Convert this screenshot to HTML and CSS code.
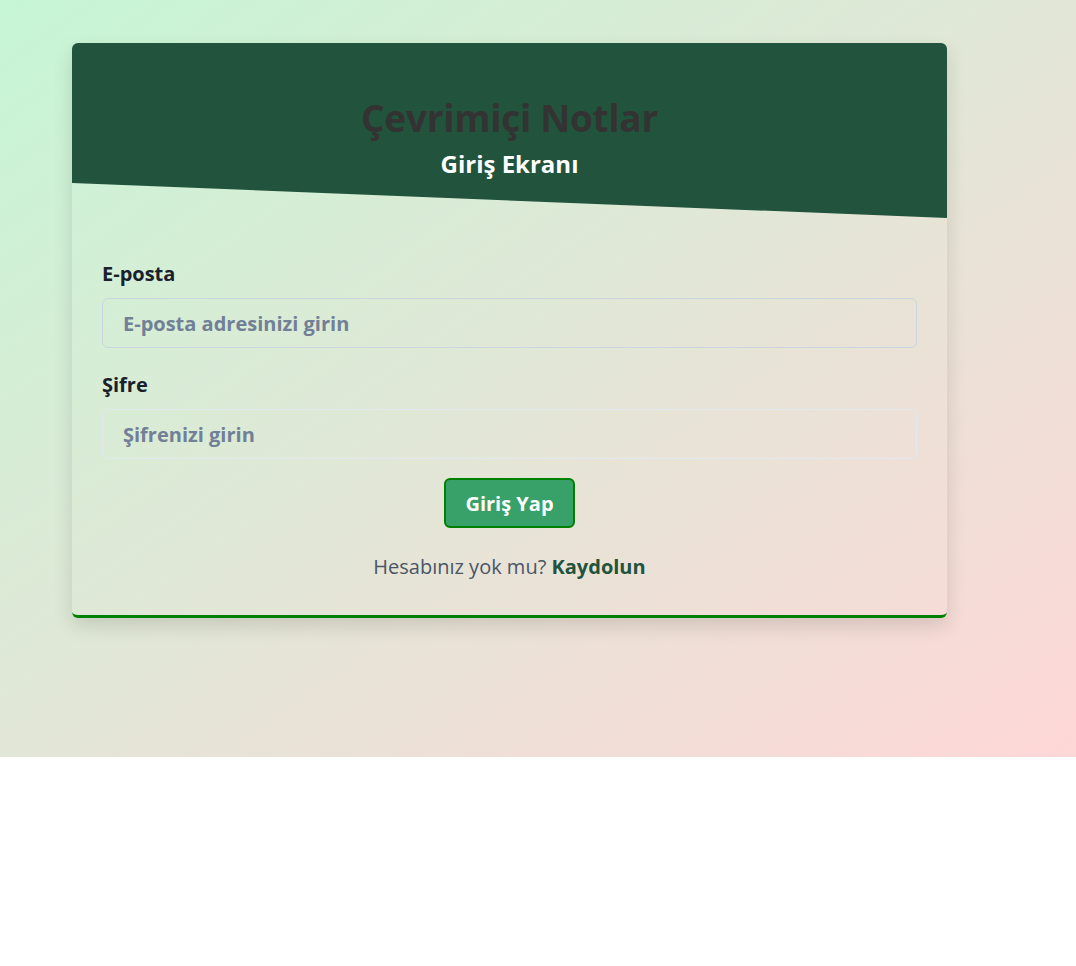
FILE: index.html
```html
<!DOCTYPE html>
<html lang="tr">
<head>
<meta charset="utf-8">
<title>Çevrimiçi Notlar - Giriş</title>
<link rel="stylesheet" href="styles.css">
</head>
<body>
<div class="page">
  <div class="card">
    <div class="card-header">
      <h1 class="title">Çevrimiçi Notlar</h1>
      <h2 class="subtitle">Giriş Ekranı</h2>
    </div>
    <form class="card-body">
      <label class="label" for="email">E-posta</label>
      <input class="input" id="email" type="email" placeholder="E-posta adresinizi girin">
      <label class="label label-second" for="pass">Şifre</label>
      <input class="input input-light" id="pass" type="password" placeholder="Şifrenizi girin">
      <div class="actions">
        <button class="btn" type="button">Giriş Yap</button>
      </div>
      <p class="signup">Hesabınız yok mu? <a class="signup-link" href="#">Kaydolun</a></p>
    </form>
  </div>
</div>
</body>
</html>
```

FILE: styles.css
```css
* { box-sizing: border-box; }
html, body { margin: 0; padding: 0; }
body { font-family: "Open Sans", Lato, "DejaVu Sans", sans-serif; background: #fff; }

.page {
  height: 757px;
  padding: 43px 0 0 72px;
  background: linear-gradient(to bottom right, #c6f6d5, #fed7d7);
}

.card {
  width: 875px;
  border-radius: 6px;
  border-bottom: 3px solid #008000;
  box-shadow: 0 8px 20px rgba(0, 0, 0, 0.13);
  overflow: hidden;
}

.card-header {
  height: 175px;
  background: #22543d;
  clip-path: polygon(0 0, 100% 0, 100% 100%, 0 80%);
  text-align: center;
  padding-top: 52px;
}
.title {
  margin: 0;
  font-size: 37px;
  line-height: 46px;
  font-weight: 700;
  color: #333;
  letter-spacing: -0.3px;
}
.subtitle {
  margin: 8px 0 0;
  font-size: 24px;
  line-height: 30px;
  font-weight: 700;
  color: #fff;
}

.card-body {
  padding: 43px 30px 35px;
  margin: 0;
}
.label {
  display: block;
  font-size: 20px;
  line-height: 26px;
  font-weight: 700;
  color: #1a202c;
  margin-bottom: 11px;
}
.label-second { margin-top: 24px; }
.input {
  display: block;
  width: 100%;
  height: 50px;
  border: 1px solid #cbd5e0;
  border-radius: 6px;
  background: transparent;
  padding: 0 20px;
  font-family: inherit;
  font-size: 20px;
  font-weight: 700;
  color: #2d3748;
  outline: none;
}
.input-light { border-color: #e2e8f0; }
.input::placeholder { color: #718096; opacity: 1; }

.actions {
  display: flex;
  justify-content: center;
  margin-top: 19px;
}
.btn {
  width: 131px;
  height: 50px;
  background: #38a169;
  border: 2px solid #008000;
  border-radius: 6px;
  color: #fff;
  font-family: inherit;
  font-size: 20px;
  font-weight: 700;
  cursor: pointer;
}

.signup {
  margin: 26px 0 0;
  text-align: center;
  font-size: 20px;
  line-height: 26px;
  color: #4a5568;
}
.signup-link {
  color: #22543d;
  font-weight: 700;
  text-decoration: none;
}
```
